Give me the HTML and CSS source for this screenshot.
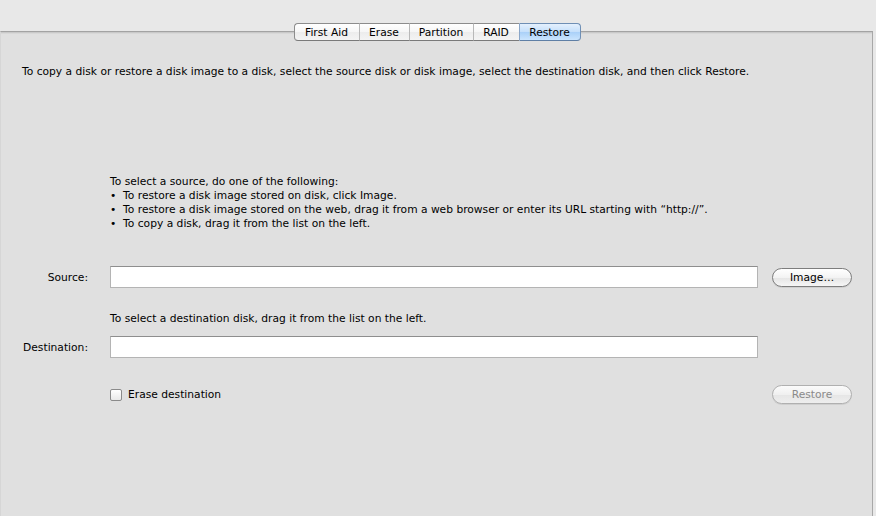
FILE: index.html
```html
<!DOCTYPE html>
<html>
<head>
<meta charset="utf-8">
<link rel="stylesheet" href="styles.css">
</head>
<body>
<div class="window">
  <div class="tabs">
    <div class="tab t-first">First Aid</div>
    <div class="tab t-erase">Erase</div>
    <div class="tab t-part">Partition</div>
    <div class="tab t-raid">RAID</div>
    <div class="tab t-restore active">Restore</div>
  </div>
  <div class="panel">
    <p class="intro">To copy a disk or restore a disk image to a disk, select the source disk or disk image, select the destination disk, and then click Restore.</p>
    <div class="help">
      <div>To select a source, do one of the following:</div>
      <div>•&nbsp; To restore a disk image stored on disk, click Image.</div>
      <div>•&nbsp; To restore a disk image stored on the web, drag it from a web browser or enter its URL starting with “http://”.</div>
      <div>•&nbsp; To copy a disk, drag it from the list on the left.</div>
    </div>
    <div class="row row-source">
      <label class="lbl">Source:</label>
      <div class="field"></div>
      <div class="btn">Image…</div>
    </div>
    <div class="hint">To select a destination disk, drag it from the list on the left.</div>
    <div class="row row-dest">
      <label class="lbl">Destination:</label>
      <div class="field"></div>
    </div>
    <div class="row row-check">
      <div class="lbl"></div>
      <div class="check-wrap"><span class="checkbox"></span><span>Erase destination</span></div>
      <div class="btn disabled">Restore</div>
    </div>
  </div>
</div>
</body>
</html>
```
FILE: styles.css
```css
html, body {
  margin: 0;
  padding: 0;
}
body {
  width: 876px;
  height: 516px;
  overflow: hidden;
  background: #e8e8e8;
  font-family: "DejaVu Sans", sans-serif;
  font-size: 10.7px;
  color: #000;
}
.window {
  padding-top: 23px;
  height: 493px;
  display: flex;
  flex-direction: column;
}
.tabs {
  position: relative;
  z-index: 2;
  display: flex;
  justify-content: center;
  height: 18px;
  margin-right: 2px;
}
.tab {
  height: 15px;
  padding-top: 1px;
  line-height: 15px;
  text-align: center;
  border-top: 1px solid #8c8c8c;
  border-bottom: 1px solid #7a7a7a;
  border-left: 1px solid #b8b8b8;
  background: linear-gradient(#ffffff 0%, #f6f6f6 50%, #ececec 51%, #f4f4f4 100%);
  box-sizing: content-box;
}
.t-first { width: 64px; border-left: 1px solid #8c8c8c; border-radius: 4px 0 0 4px; }
.t-erase { width: 49px; }
.t-part { width: 63px; }
.t-raid { width: 45px; }
.t-restore {
  width: 60px;
  border-right: 1px solid #6f8fb5;
  border-radius: 0 4px 4px 0;
}
.tab.active {
  background: linear-gradient(#e4f0fd 0%, #c4dffb 50%, #a9d0f8 51%, #cbe5fe 100%);
  border-top-color: #6f8fb5;
  border-bottom-color: #5f7fa5;
  border-left-color: #8aa6c8;
}
.panel {
  flex: 1;
  margin-top: -10px;
  width: 873px;
  border-top: 1px solid #a3a3a3;
  border-right: 1px solid #a8a8a8;
  border-left: 1px solid #d6d6d6;
  box-shadow: inset 0 1px 0 #c9c9c9, inset 0 2px 0 #d8d8d8;
  background: #e0e0e0;
  box-sizing: border-box;
  padding-top: 33px;
}
.intro {
  margin: 0 0 0 21px;
  line-height: 14px;
  white-space: nowrap;
}
.help {
  margin: 96px 0 0 109px;
  line-height: 14px;
}
.row {
  display: flex;
  align-items: center;
}
.lbl {
  width: 87px;
  text-align: right;
  margin-right: 22px;
  flex: none;
}
.field {
  width: 646px;
  height: 20px;
  background: #fff;
  border: 1px solid #b4b4b4;
  border-top-color: #8e8e8e;
  flex: none;
}
.row-source {
  margin-top: 35px;
}
.btn {
  margin-left: 14px;
  width: 78px;
  height: 17px;
  line-height: 17px;
  text-align: center;
  border: 1px solid #7d7d7d;
  border-radius: 10px;
  background: linear-gradient(#ffffff 0%, #f3f3f3 50%, #e6e6e6 55%, #f6f6f6 100%);
  box-shadow: 0 1px 0 #cfcfcf;
}
.btn.disabled {
  color: #8a8a8a;
  border-color: #b0b0b0;
  background: linear-gradient(#fbfbfb 0%, #f0f0f0 50%, #e6e6e6 55%, #eeeeee 100%);
}
.hint {
  margin: 24px 0 0 109px;
  line-height: 14px;
}
.row-dest {
  margin-top: 10px;
}
.row-check {
  margin-top: 27px;
}
.check-wrap {
  width: 648px;
  display: flex;
  align-items: center;
  gap: 6px;
}
.checkbox {
  width: 10px;
  height: 10px;
  border: 1px solid #8a8a8a;
  border-radius: 2px;
  background: linear-gradient(#ffffff, #e9e9e9);
}
```
